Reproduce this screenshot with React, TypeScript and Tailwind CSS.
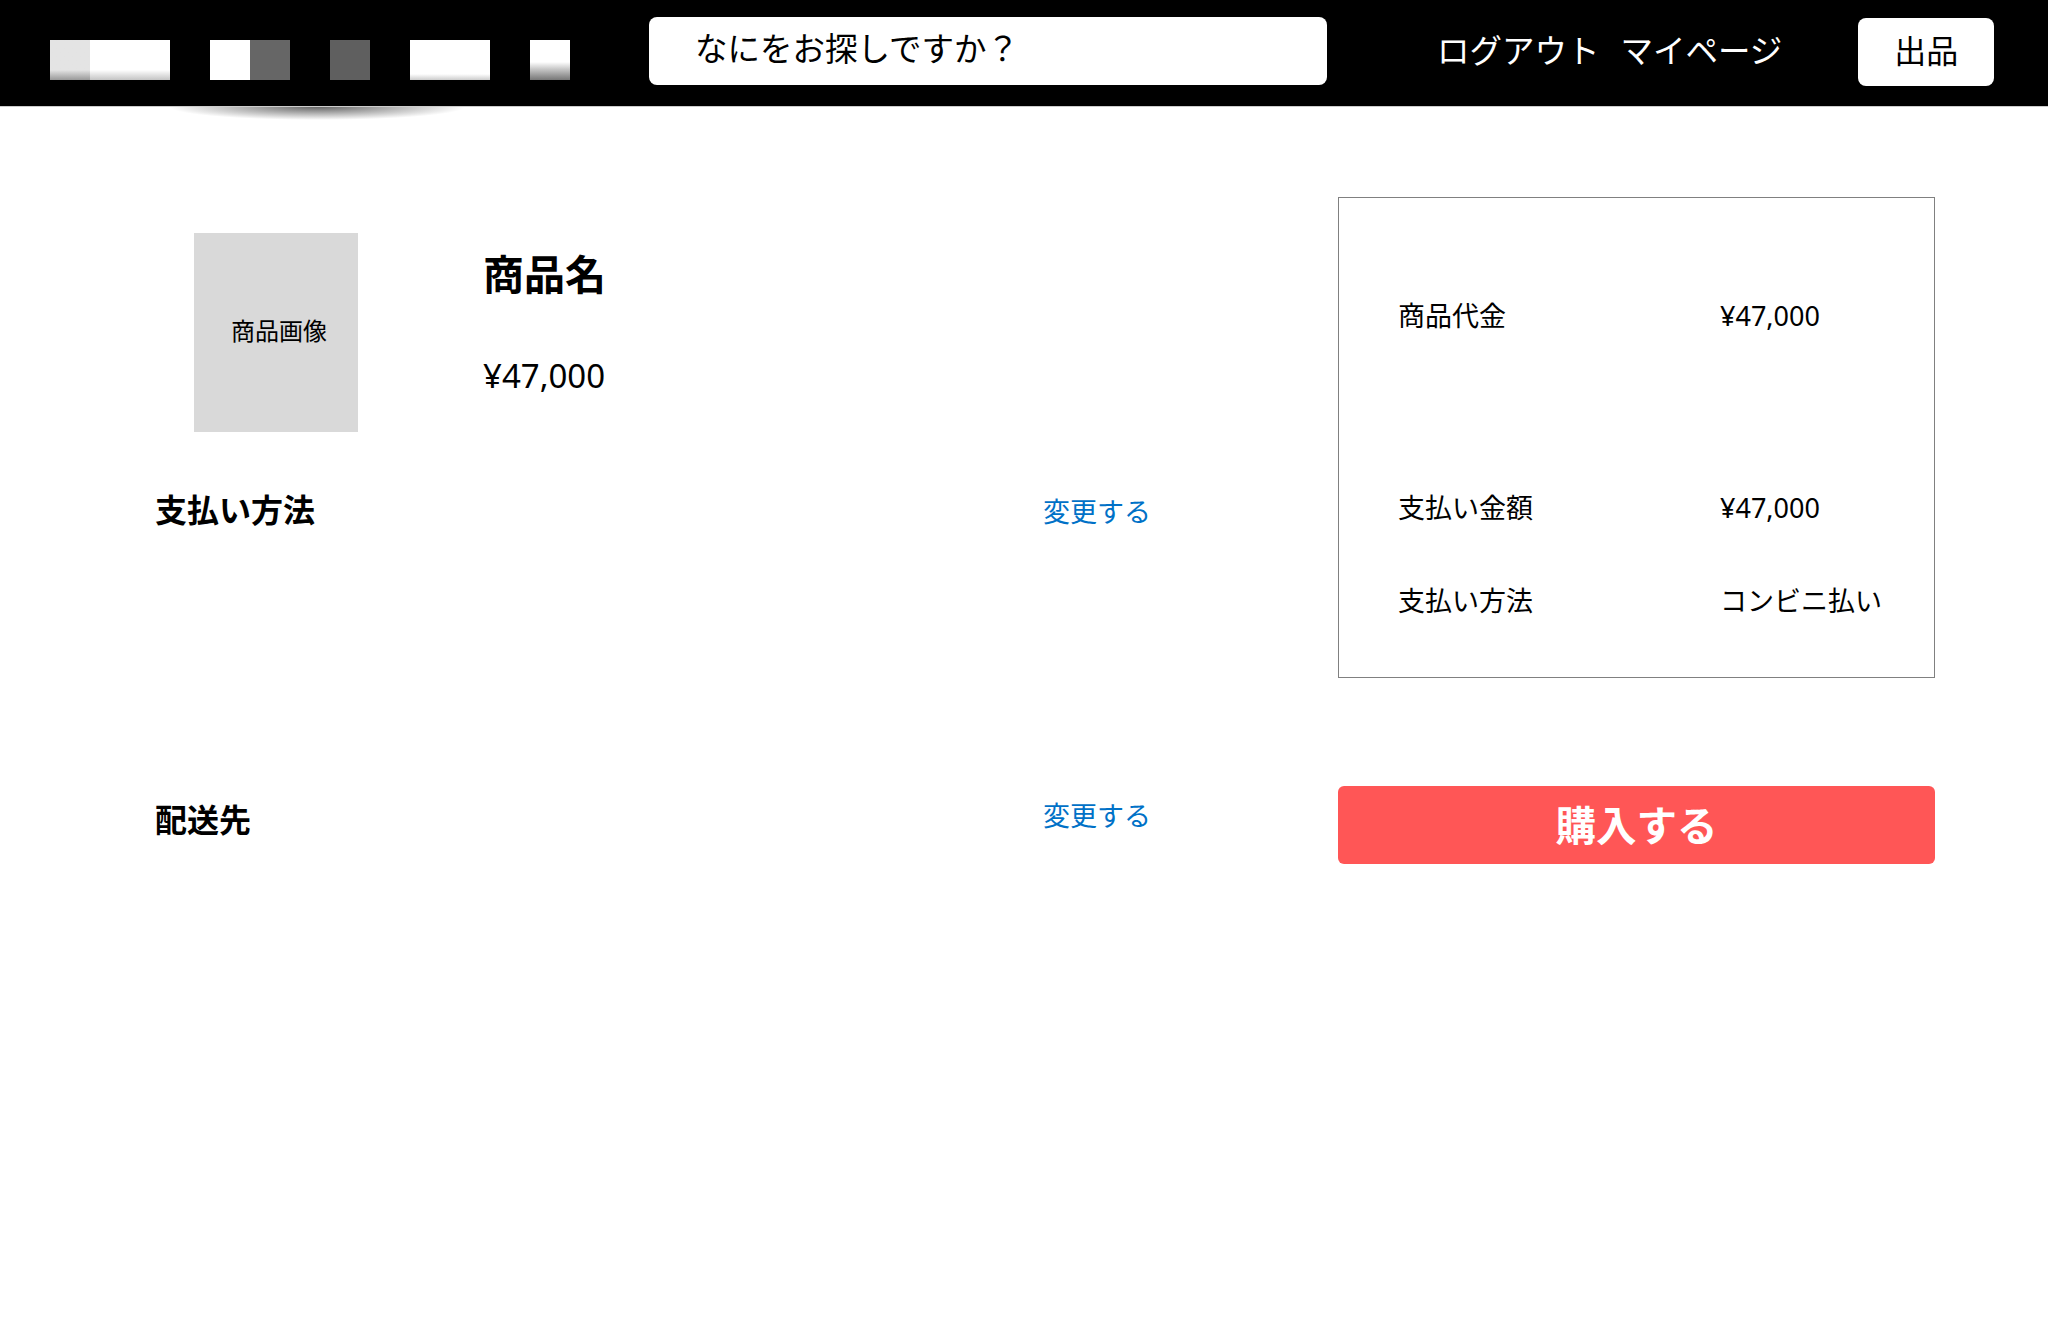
import React from 'react';

const jp = "font-['Noto_Sans','Noto_Sans_CJK_JP',sans-serif]";

const Row = ({ label, value, className }: { label: string; value: string; className?: string }) => (
  <div className={`flex items-center text-[27px] leading-[40px] text-black ${className ?? ''}`}>
    <span className="w-[322px] shrink-0">{label}</span>
    <span className="whitespace-nowrap">{value}</span>
  </div>
);

const App: React.FC = () => {
  return (
    <div className={`relative h-[1329px] w-[2048px] overflow-hidden bg-white ${jp}`}>
      <header className="flex h-[107px] items-start border-b border-[#ccc] bg-black">
        <div className="mt-[40px] ml-[50px] flex h-[40px] w-[520px] shrink-0 items-stretch">
          <div className="w-[40px] bg-gradient-to-b from-[#e4e4e4] from-75% to-[#999]" />
          <div className="w-[80px] bg-gradient-to-b from-white from-75% to-[#c4c4c4]" />
          <div className="ml-[40px] w-[40px] bg-white" />
          <div className="w-[40px] bg-[#666]" />
          <div className="ml-[40px] w-[40px] bg-[#5f5f5f]" />
          <div className="ml-[40px] w-[80px] bg-gradient-to-b from-white from-85% to-[#ccc]" />
          <div className="ml-[40px] w-[40px] bg-gradient-to-b from-white from-55% to-[#777]" />
        </div>
        <div className="mt-[17px] ml-[79px] flex h-[68px] w-[678px] shrink-0 items-center rounded-lg bg-white pb-[4px] pl-[46px] text-[32.5px] text-black">
          なにをお探しですか？
        </div>
        <nav className="mt-[25px] ml-[110px] flex gap-[21px] text-[32.5px] leading-[52px] whitespace-nowrap text-white">
          <span>ログアウト</span>
          <span>マイページ</span>
        </nav>
        <button className="mt-[18px] ml-[76px] flex h-[68px] w-[136px] shrink-0 items-center justify-center rounded-lg bg-white pb-[3px] text-[32px] text-black">
          出品
        </button>
      </header>
      <div className="absolute top-[107px] left-[170px] h-[13px] w-[295px] bg-[radial-gradient(ellipse_50%_100%_at_center_top,#666,transparent)]" />

      <main className="flex items-start pt-[90px] pl-[155px]">
        <div className="w-[1183px] shrink-0 pt-[36px] pr-[187px]">
          <section className="flex items-start pl-[39px]">
            <div className="flex h-[199px] w-[164px] items-center justify-center bg-[#d9d9d9] pb-[4px] pl-[6px] text-[24px] whitespace-nowrap text-black">
              商品画像
            </div>
            <div className="ml-[125px]">
              <h1 className="mt-[11px] text-[41px] leading-[60px] font-bold text-black">商品名</h1>
              <p className="mt-[48px] text-[33px] leading-[48px] text-black">¥47,000</p>
            </div>
          </section>
          <section className="mt-[52px] flex h-[48px] items-center justify-between">
            <h2 className="mt-[4px] text-[32px] font-bold text-black">支払い方法</h2>
            <a className="mt-[8px] text-[27px] text-[#0071c7]">変更する</a>
          </section>
          <section className="mt-[262px] flex h-[48px] items-center justify-between">
            <h2 className="mt-[4px] text-[32px] font-bold text-black">配送先</h2>
            <a className="-mt-[3px] text-[27px] text-[#0071c7]">変更する</a>
          </section>
        </div>
        <aside className="w-[597px] shrink-0">
          <div className="h-[481px] border border-[#808080] pt-[98px] pl-[59px]">
            <Row label="商品代金" value="¥47,000" />
            <Row label="支払い金額" value="¥47,000" className="mt-[152px]" />
            <Row label="支払い方法" value="コンビニ払い" className="mt-[53px]" />
          </div>
          <button className="mt-[108px] flex h-[78px] w-full items-center justify-center rounded-md bg-[#ff5656] pt-[2px] text-[40.5px] font-bold text-white">
            購入する
          </button>
        </aside>
      </main>
    </div>
  );
};

export default App;
